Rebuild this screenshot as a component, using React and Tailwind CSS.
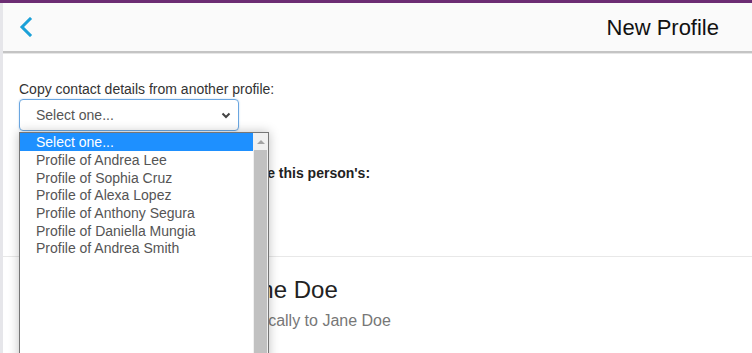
import React from 'react';

const profiles = [
  'Profile of Andrea Lee',
  'Profile of Sophia Cruz',
  'Profile of Alexa Lopez',
  'Profile of Anthony Segura',
  'Profile of Daniella Mungia',
  'Profile of Andrea Smith',
];

const BackIcon = () => (
  <svg width="14" height="20" viewBox="0 0 14 20" fill="none">
    <path d="M11 2 L3 10 L11 18" stroke="#1ba1d8" strokeWidth="3" strokeLinecap="square" />
  </svg>
);

const ChevronDown = () => (
  <svg width="10" height="7" viewBox="0 0 10 7" fill="none">
    <path d="M1.5 1.5 L5 5 L8.5 1.5" stroke="#444" strokeWidth="2" />
  </svg>
);

// open native-looking option list, lies over the page
const Dropdown = () => (
  <div className="absolute left-0 top-[calc(100%+1px)] w-[250px] h-[260px] bg-white border border-[#767676] shadow-[0_0_10px_rgba(0,0,0,0.25)] flex z-10">
    <div className="flex-1">
      <div className="h-[18px] bg-[#1e90ff] text-white pl-4 leading-[19px]">Select one...</div>
      {profiles.map((p) => (
        <div key={p} className="h-[17.7px] pl-4 leading-[19px] text-[#555]">{p}</div>
      ))}
    </div>
    <div className="w-[15px] bg-[#f0f0f0] flex flex-col items-center">
      <div className="h-[17px] flex items-center justify-center">
        <div className="w-0 h-0 border-l-[4px] border-r-[4px] border-b-[4px] border-l-transparent border-r-transparent border-b-[#a3a3a3]" />
      </div>
      <div className="w-[13px] flex-1 bg-[#c1c1c1]" />
    </div>
  </div>
);

export default function App() {
  return (
    <div className="w-[752px] h-[353px] overflow-hidden bg-white flex flex-col" style={{ fontFamily: '"Liberation Sans", Arial, sans-serif' }}>
      <div className="h-[3px] bg-[#6c2c73]" />
      <div className="flex flex-1">
        <div className="w-[3px] bg-[#e6e6ea]" />
        <div className="flex-1 flex flex-col">
          {/* Header */}
          <div className="h-[50px] bg-[#fafafa] border-b-2 border-[#c4c4c4] shadow-[0_1px_0_#e6e6e6] flex items-center justify-between pl-4 pr-[33px]">
            <BackIcon />
            <span className="text-[22px] text-[#111]">New Profile</span>
          </div>

          {/* Content */}
          <div className="pt-[28px]">
            <div className="px-4">
              <div className="text-[14px] text-[#333] leading-[16px]">Copy contact details from another profile:</div>
              <div className="relative mt-[2px] w-[220px] text-[14px]">
                <div className="h-[32px] border border-[#6aa6e0] rounded-[4px] flex items-center justify-between pl-4 pr-[7px] text-[#555] shadow-[0_0_2px_rgba(80,150,220,0.4)]">
                  <span>Select one...</span>
                  <ChevronDown />
                </div>
                <Dropdown />
              </div>
              <div className="mt-[34px] text-[14px] leading-[16px] font-bold text-[#222]">Decide which of the details will update this person's:</div>
            </div>

            <div className="mt-[75px] border-t border-[#e8e8e8] pt-[19px] pl-[232px]">
              <div className="text-[24px] text-[#222] leading-[28px]">Jane Doe</div>
              <div className="mt-[5px] text-[16px] text-[#777] -ml-[30px]">Automatically to Jane Doe</div>
            </div>
          </div>
        </div>
      </div>
    </div>
  );
}
